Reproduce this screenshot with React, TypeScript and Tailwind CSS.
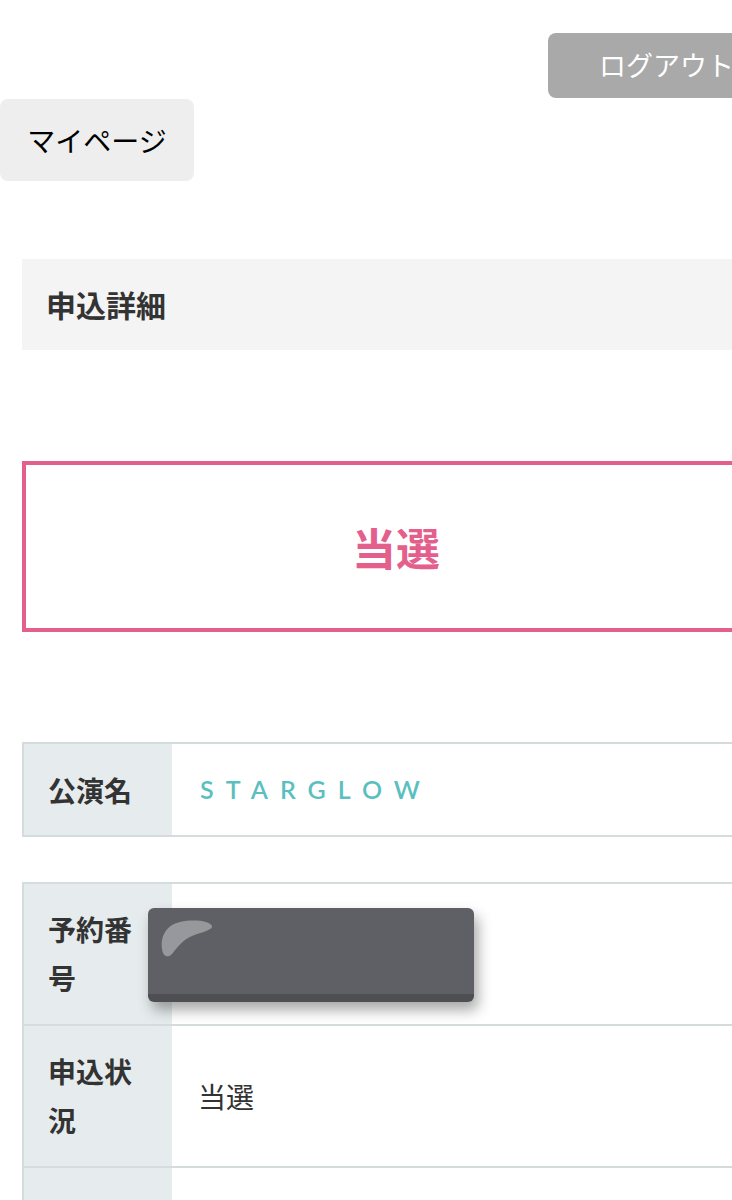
const jp = { fontFamily: '"Noto Sans CJK JP", "Noto Sans", sans-serif' };

function Row({ label, children, first }: { label: string; children: React.ReactNode; first?: boolean }) {
  return (
    <div className={`flex ${first ? '' : 'border-t-2 border-[#d5dcdd]'}`}>
      <div className="w-[148px] shrink-0 bg-[#e6eced] pl-6 pr-[30px] py-[21px] text-[28px] leading-[49px] font-bold text-[#333]">
        {label}
      </div>
      <div className="flex-1 flex items-center pl-[26px] relative">{children}</div>
    </div>
  );
}

export default function App() {
  return (
    <div className="w-[732px] h-[1200px] overflow-hidden bg-white" style={jp}>
      <div className="w-[792px]">
        <div className="flex pt-[33px]">
          <div className="ml-[548px] w-[220px] h-[65px] rounded-lg bg-[#a9a9a9] text-white text-[27px] pl-[51px] flex items-center whitespace-nowrap">
            ログアウト
          </div>
        </div>
        <div className="mt-px w-[194px] h-[82px] rounded-lg bg-[#eeeeee] text-black text-[28px] flex items-center justify-center">
          マイページ
        </div>

        <div className="mx-[22px] mt-[78px] h-[91px] bg-[#f4f4f4] pl-6 flex items-center text-[30px] font-bold text-[#333]">
          申込詳細
        </div>

        <div className="mx-[22px] mt-[111px] h-[171px] border-4 border-[#e4608c] flex items-center justify-center text-[44px] font-bold text-[#e4608c]">
          当選
        </div>

        <div className="mx-[22px] mt-[110px] border-2 border-[#d5dcdd]">
          <div className="flex">
            <div className="w-[148px] shrink-0 bg-[#e6eced] pl-6 h-[91px] flex items-center text-[28px] font-bold text-[#333]">
              公演名
            </div>
            <div
              className="flex-1 flex items-center pl-[28px] text-[25px] font-semibold tracking-[12px] text-[#5bbfbf]"
              style={{ fontFamily: 'Lato, "Noto Sans", sans-serif' }}
            >
              STARGLOW
            </div>
          </div>
        </div>

        <div className="mx-[22px] mt-[45px] border-2 border-[#d5dcdd]">
          <Row label="予約番号" first>
            <div className="absolute left-[-24px] top-[24px] w-[326px] h-[94px] rounded-[6px] bg-[#5f6065] shadow-[4px_8px_14px_rgba(0,0,0,0.35)] border-b-[8px] border-[#4e4f53]">
              <svg className="absolute left-[12px] top-[11px]" width="54" height="40" viewBox="0 0 54 40">
                <path d="M2 30 C 0 18, 6 6, 20 3 C 34 0, 50 2, 52 7 C 53 11, 42 13, 32 17 C 22 21, 16 30, 12 35 C 8 39, 3 38, 2 30 Z" fill="#97989b" />
              </svg>
            </div>
          </Row>
          <Row label="申込状況">
            <span className="text-[28px] text-[#333]">当選</span>
          </Row>
          <Row label="　">
            <span />
          </Row>
        </div>
      </div>
    </div>
  );
}
